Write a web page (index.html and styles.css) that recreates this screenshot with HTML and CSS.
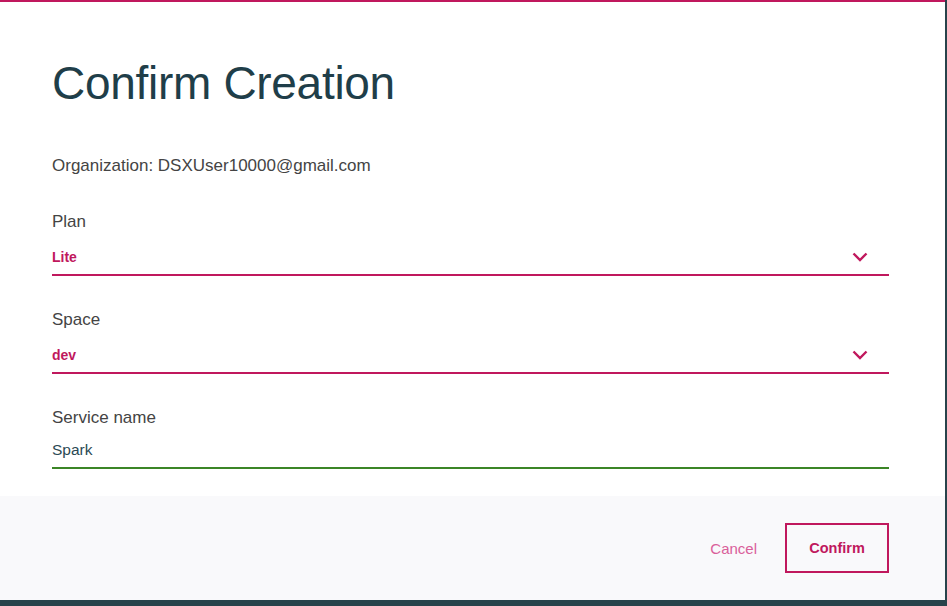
FILE: index.html
```html
<!DOCTYPE html>
<html>
<head>
<meta charset="utf-8">
<link rel="stylesheet" href="styles.css">
</head>
<body>
<div class="modal">
  <div class="content">
    <h1 class="title">Confirm Creation</h1>
    <p class="org">Organization: DSXUser10000@gmail.com</p>
    <div class="field">
      <div class="label">Plan</div>
      <div class="select">
        <span class="value">Lite</span>
        <svg class="chev" width="16" height="10" viewBox="0 0 16 10"><path d="M1.5 1.5 L8 8 L14.5 1.5" fill="none" stroke="#c0185d" stroke-width="2.4"/></svg>
      </div>
    </div>
    <div class="field">
      <div class="label">Space</div>
      <div class="select">
        <span class="value">dev</span>
        <svg class="chev" width="16" height="10" viewBox="0 0 16 10"><path d="M1.5 1.5 L8 8 L14.5 1.5" fill="none" stroke="#c0185d" stroke-width="2.4"/></svg>
      </div>
    </div>
    <div class="field">
      <div class="label">Service name</div>
      <div class="input">Spark</div>
    </div>
  </div>
  <div class="footer">
    <button class="cancel">Cancel</button>
    <button class="confirm">Confirm</button>
  </div>
</div>
</body>
</html>
```
FILE: styles.css
```css
html, body {
  margin: 0;
  padding: 0;
  background: #27434b;
  height: 606px;
  overflow: hidden;
}
body {
  font-family: "Liberation Sans", Arial, sans-serif;
}
.modal {
  width: 945px;
  height: 600px;
  box-sizing: border-box;
  background: #ffffff;
  border-top: 2px solid #c0185d;
  display: flex;
  flex-direction: column;
}
.content {
  flex: 1;
  padding: 0 56px 0 52px;
}
.title {
  margin: 51px 0 0 0;
  font-size: 46px;
  font-weight: 300;
  color: #1f3e49;
  line-height: 60px;
  letter-spacing: -0.3px;
}
.org {
  margin: 43px 0 0 0;
  font-size: 17px;
  line-height: 20px;
  color: #444444;
}
.field {
  margin-top: 36px;
}
.field + .field {
  margin-top: 34px;
}
.label {
  font-size: 17px;
  line-height: 20px;
  color: #444444;
}
.select {
  display: flex;
  justify-content: space-between;
  align-items: center;
  height: 44px;
  box-sizing: border-box;
  border-bottom: 2px solid #c0185d;
  padding: 8px 21px 0 0;
}
.value {
  font-size: 14px;
  font-weight: bold;
  color: #c0185d;
}
.chev {
  display: block;
}
.input {
  height: 41px;
  box-sizing: border-box;
  border-bottom: 2px solid #3b8526;
  font-size: 15.5px;
  line-height: 18px;
  color: #2b4954;
  padding-top: 13px;
}
.footer {
  height: 104px;
  background: #f9f9fb;
  display: flex;
  justify-content: flex-end;
  align-items: center;
  padding-right: 56px;
  gap: 28px;
}
button {
  font-family: "Liberation Sans", Arial, sans-serif;
  font-size: 14.5px;
  background: transparent;
  cursor: pointer;
}
.cancel {
  border: none;
  color: #d9609a;
  padding: 0;
  font-size: 15px;
}
.confirm {
  width: 104px;
  height: 50px;
  border: 2px solid #c0185d;
  color: #c0185d;
  font-weight: bold;
}
```
